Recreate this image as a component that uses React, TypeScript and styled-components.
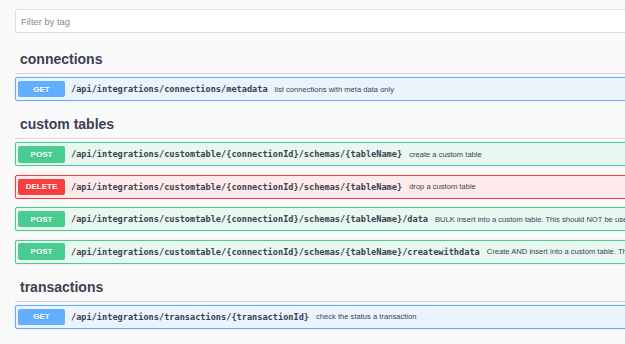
import React from "react";
import styled, { createGlobalStyle } from "styled-components";

type Method = "get" | "post" | "delete";

type Operation = {
  method: Method;
  path: string;
  summary: string;
};

type Tag = {
  name: string;
  operations: Operation[];
};

const colors: Record<Method, { main: string; bg: string }> = {
  get: { main: "#61affe", bg: "#ebf3fd" },
  post: { main: "#49cc90", bg: "#e9f7f1" },
  delete: { main: "#f93e3e", bg: "#fdebeb" },
};

const tags: Tag[] = [
  {
    name: "connections",
    operations: [
      {
        method: "get",
        path: "/api/integrations/connections/metadata",
        summary: "list connections with meta data only",
      },
    ],
  },
  {
    name: "custom tables",
    operations: [
      {
        method: "post",
        path: "/api/integrations/customtable/{connectionId}/schemas/{tableName}",
        summary: "create a custom table",
      },
      {
        method: "delete",
        path: "/api/integrations/customtable/{connectionId}/schemas/{tableName}",
        summary: "drop a custom table",
      },
      {
        method: "post",
        path: "/api/integrations/customtable/{connectionId}/schemas/{tableName}/data",
        summary:
          "BULK insert into a custom table. This should NOT be used for large amounts of data",
      },
      {
        method: "post",
        path: "/api/integrations/customtable/{connectionId}/schemas/{tableName}/createwithdata",
        summary:
          "Create AND insert into a custom table. This should NOT be used for large amounts of data",
      },
    ],
  },
  {
    name: "transactions",
    operations: [
      {
        method: "get",
        path: "/api/integrations/transactions/{transactionId}",
        summary: "check the status a transaction",
      },
    ],
  },
];

const GlobalStyle = createGlobalStyle`
  html, body {
    margin: 0;
    padding: 0;
    background: #fafafa;
    overflow: hidden;
  }
  body {
    font-family: "Liberation Sans", Arial, sans-serif;
    color: #3b4151;
  }
`;

const Wrapper = styled.div`
  width: 1100px;
  padding: 9px 0 0 15px;
`;

const FilterInput = styled.input`
  display: block;
  box-sizing: border-box;
  width: 100%;
  height: 24px;
  margin: 0 0 11px;
  padding: 0 5px;
  border: 1px solid #d8dde7;
  border-radius: 2px;
  background: #fff;
  font-family: "Liberation Sans", Arial, sans-serif;
  font-size: 9.4px;
  outline: none;

  &::placeholder {
    color: #8a8a8a;
  }
`;

const Section = styled.section`
  padding-top: 6px;
`;

const TagHeading = styled.h4`
  margin: 0 0 3px;
  padding: 0 5px 5px 5px;
  font-size: 14px;
  line-height: 18px;
  font-weight: bold;
  color: #3b4151;
  border-bottom: 1px solid #d3d5d9;
`;

const OpBlock = styled.div<{ $method: Method }>`
  box-sizing: border-box;
  display: flex;
  align-items: center;
  gap: 6px;
  height: 24px;
  margin-bottom: 8.4px;
  padding: 0 2px;
  border: 1px solid ${(p) => colors[p.$method].main};
  border-radius: 2px;
  background: ${(p) => colors[p.$method].bg};
  box-shadow: 0 0 2px rgba(0, 0, 0, 0.12);
  white-space: nowrap;
`;

const MethodBadge = styled.span<{ $method: Method }>`
  display: flex;
  align-items: center;
  justify-content: center;
  flex: none;
  width: 47px;
  height: 16.5px;
  border-radius: 2px;
  background: ${(p) => colors[p.$method].main};
  color: #fff;
  font-size: 8px;
  font-weight: bold;
  text-shadow: 0 1px 0 rgba(0, 0, 0, 0.1);
`;

const OpPath = styled.span`
  font-family: "DejaVu Sans Mono", "Liberation Mono", monospace;
  font-size: 8.6px;
  font-weight: bold;
  color: #3b4151;
`;

const OpSummary = styled.span`
  padding-left: 1px;
  font-size: 7.6px;
  color: #3b4151;
`;

export default function App() {
  return (
    <>
      <GlobalStyle />
      <Wrapper>
        <FilterInput placeholder="Filter by tag" />
        {tags.map((tag) => (
          <Section key={tag.name}>
            <TagHeading>{tag.name}</TagHeading>
            {tag.operations.map((op, i) => (
              <OpBlock key={i} $method={op.method}>
                <MethodBadge $method={op.method}>
                  {op.method.toUpperCase()}
                </MethodBadge>
                <OpPath>{op.path}</OpPath>
                <OpSummary>{op.summary}</OpSummary>
              </OpBlock>
            ))}
          </Section>
        ))}
      </Wrapper>
    </>
  );
}
